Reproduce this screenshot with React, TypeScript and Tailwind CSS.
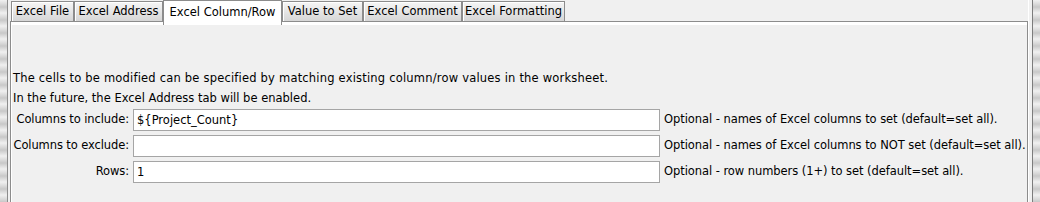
import React from 'react';

const tabs = [
  { label: 'Excel File', w: 'w-[63px]' },
  { label: 'Excel Address', w: 'w-[89px]' },
  { label: 'Excel Column/Row', w: 'w-[119px]', active: true },
  { label: 'Value to Set', w: 'w-[81px]' },
  { label: 'Excel Comment', w: 'w-[99px]' },
  { label: 'Excel Formatting', w: 'w-[103px]' },
];

const rows = [
  {
    label: 'Columns to include:',
    value: '${Project_Count}',
    help: 'Optional - names of Excel columns to set (default=set all).',
  },
  {
    label: 'Columns to exclude:',
    value: '',
    help: 'Optional - names of Excel columns to NOT set (default=set all).',
  },
  {
    label: 'Rows:',
    value: '1',
    help: 'Optional - row numbers (1+) to set (default=set all).',
  },
];

function Grip() {
  // splitter grip on either side of the panel
  return (
    <div className="w-[7px] h-full bg-[repeating-linear-gradient(180deg,#f0f0f0_0px,#dadada_4px,#c8c8c8_7px,#dcdcdc_10px,#f0f0f0_13px)]" />
  );
}

export default function App() {
  return (
    <div className="w-[1040px] h-[202px] flex bg-[#f0f0f0] overflow-hidden text-[11.5px] text-black font-['DejaVu_Sans',sans-serif]">
      {/* left splitter */}
      <Grip />
      <div className="w-[3px] h-full border-l border-[#8c8c8c] bg-[#f0f0f0]" />

      {/* tabbed pane */}
      <div className="w-[1018px] h-full flex flex-col">
        <div className="h-[21px] flex items-end pl-[1px]">
          {tabs.map((t) =>
            t.active ? (
              <div
                key={t.label}
                className={`${t.w} h-[25px] -mb-[4px] relative z-10 flex items-start justify-center pt-[3px] bg-white border border-b-0 border-[#8c8c8c] whitespace-nowrap`}
              >
                {t.label}
              </div>
            ) : (
              <div
                key={t.label}
                className={`${t.w} h-[20px] flex items-center justify-center pt-[1px] bg-gradient-to-b from-[#f6f6f6] to-[#d6d6d6] border border-b-0 border-[#8c8c8c] shadow-[inset_1px_1px_0_#ffffff] whitespace-nowrap`}
              >
                {t.label}
              </div>
            )
          )}
        </div>
        <div className="flex-1 border-t border-x border-[#8c8c8c]">
          <div className="h-full border-t-[3px] border-l border-white bg-[#f0f0f0] pt-[43px] pl-[1px] whitespace-nowrap">
            <p className="h-[20px] leading-[20px] tracking-[0.2px]">
              The cells to be modified can be specified by matching existing column/row values in the worksheet.
            </p>
            <p className="h-[20px] leading-[20px]">In the future, the Excel Address tab will be enabled.</p>
            <div className="mt-[1px] grid grid-cols-[116px_527px_auto] gap-x-[4px] gap-y-[4px] items-center">
              {rows.map((r) => (
                <React.Fragment key={r.label}>
                  <span className="text-right -ml-[4px] tracking-[-0.1px]">{r.label}</span>
                  <div className="h-[22px] border border-[#a5a5a5] bg-white px-[3px] leading-[20px]">{r.value}</div>
                  <span className="tracking-[-0.06px]">{r.help}</span>
                </React.Fragment>
              ))}
            </div>
          </div>
        </div>
      </div>

      {/* right edge */}
      <div className="w-[4px] h-full bg-[#f0f0f0] border-l border-white" />
      <div className="w-[1px] h-full bg-[#7c7c7c]" />
      <Grip />
    </div>
  );
}
